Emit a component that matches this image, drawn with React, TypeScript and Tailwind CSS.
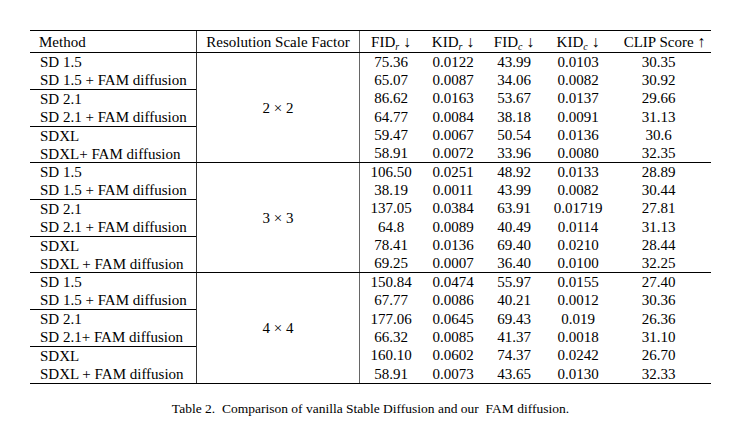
import React from 'react';

type _row = [string, string, string, string, string, string];

const blocks: { factor: string; rows: _row[] }[] = [
  {
    factor: '2 × 2',
    rows: [
      ['SD 1.5', '75.36', '0.0122', '43.99', '0.0103', '30.35'],
      ['SD 1.5 + FAM diffusion', '65.07', '0.0087', '34.06', '0.0082', '30.92'],
      ['SD 2.1', '86.62', '0.0163', '53.67', '0.0137', '29.66'],
      ['SD 2.1 + FAM diffusion', '64.77', '0.0084', '38.18', '0.0091', '31.13'],
      ['SDXL', '59.47', '0.0067', '50.54', '0.0136', '30.6'],
      ['SDXL+ FAM diffusion', '58.91', '0.0072', '33.96', '0.0080', '32.35'],
    ],
  },
  {
    factor: '3 × 3',
    rows: [
      ['SD 1.5', '106.50', '0.0251', '48.92', '0.0133', '28.89'],
      ['SD 1.5 + FAM diffusion', '38.19', '0.0011', '43.99', '0.0082', '30.44'],
      ['SD 2.1', '137.05', '0.0384', '63.91', '0.01719', '27.81'],
      ['SD 2.1 + FAM diffusion', '64.8', '0.0089', '40.49', '0.0114', '31.13'],
      ['SDXL', '78.41', '0.0136', '69.40', '0.0210', '28.44'],
      ['SDXL + FAM diffusion', '69.25', '0.0007', '36.40', '0.0100', '32.25'],
    ],
  },
  {
    factor: '4 × 4',
    rows: [
      ['SD 1.5', '150.84', '0.0474', '55.97', '0.0155', '27.40'],
      ['SD 1.5 + FAM diffusion', '67.77', '0.0086', '40.21', '0.0012', '30.36'],
      ['SD 2.1', '177.06', '0.0645', '69.43', '0.019', '26.36'],
      ['SD 2.1+ FAM diffusion', '66.32', '0.0085', '41.37', '0.0018', '31.10'],
      ['SDXL', '160.10', '0.0602', '74.37', '0.0242', '26.70'],
      ['SDXL + FAM diffusion', '58.91', '0.0073', '43.65', '0.0130', '32.33'],
    ],
  },
];

const numCols = ['w-[62px]', 'w-[62px]', 'w-[60px]', 'w-[68px]', 'flex-1'];

const App: React.FC = () => {
  return (
    <div
      className="w-[739px] h-[430px] bg-white text-black pt-[30px] pl-[30px]"
      style={{ fontFamily: '"Liberation Serif", "Times New Roman", serif' }}
    >
      <div className="w-[681px] border-t border-b border-black text-[15px]">
        {/* header */}
        <div className="flex h-[22px] border-b border-black items-center leading-[22px]">
          <div className="w-[167px] h-full pl-[9px] border-r border-[#333]">Method</div>
          <div className="w-[163px] h-full text-center border-r border-[#666]">Resolution Scale Factor</div>
          <div className="w-[62px] h-full text-center">
            FID<sub className="italic text-[10px]">r</sub> <span className="text-[16px]">↓</span>
          </div>
          <div className="w-[62px] h-full text-center">
            KID<sub className="italic text-[10px]">r</sub> <span className="text-[16px]">↓</span>
          </div>
          <div className="w-[60px] h-full text-center">
            FID<sub className="italic text-[10px]">c</sub> <span className="text-[16px]">↓</span>
          </div>
          <div className="w-[68px] h-full text-center">
            KID<sub className="italic text-[10px]">c</sub> <span className="text-[16px]">↓</span>
          </div>
          <div className="flex-1 h-full text-center pl-[6px]">
            CLIP Score <span className="text-[16px]">↑</span>
          </div>
        </div>

        {blocks.map((block, bi) => (
          <div
            key={bi}
            className={`flex h-[110px] leading-[18px] ${bi < blocks.length - 1 ? 'border-b border-black' : ''}`}
          >
            <div className="w-[167px] flex flex-col border-r border-[#333]">
              {[0, 2, 4].map((g) => (
                <div key={g} className={`flex-1 flex flex-col ${g < 4 ? 'border-b border-black' : ''}`}>
                  <div className="flex-1 flex items-center pl-[10px]">{block.rows[g][0]}</div>
                  <div className="flex-1 flex items-center pl-[10px]">{block.rows[g + 1][0]}</div>
                </div>
              ))}
            </div>
            <div className="w-[163px] flex items-center justify-center border-r border-[#666]">
              {block.factor}
            </div>
            <div className="flex-1 flex flex-col">
              {block.rows.map((row, ri) => (
                <div key={ri} className="flex-1 flex items-center">
                  {row.slice(1).map((v, ci) => (
                    <div key={ci} className={`${numCols[ci]} text-center ${ci === 4 ? 'pr-[6px]' : ''}`}>
                      {v}
                    </div>
                  ))}
                </div>
              ))}
            </div>
          </div>
        ))}
      </div>

      <div className="w-[681px] mt-[15px] text-center text-[13.5px] whitespace-pre">
        {'Table 2.  Comparison of vanilla Stable Diffusion and our  FAM diffusion.'}
      </div>
    </div>
  );
};

export default App;
